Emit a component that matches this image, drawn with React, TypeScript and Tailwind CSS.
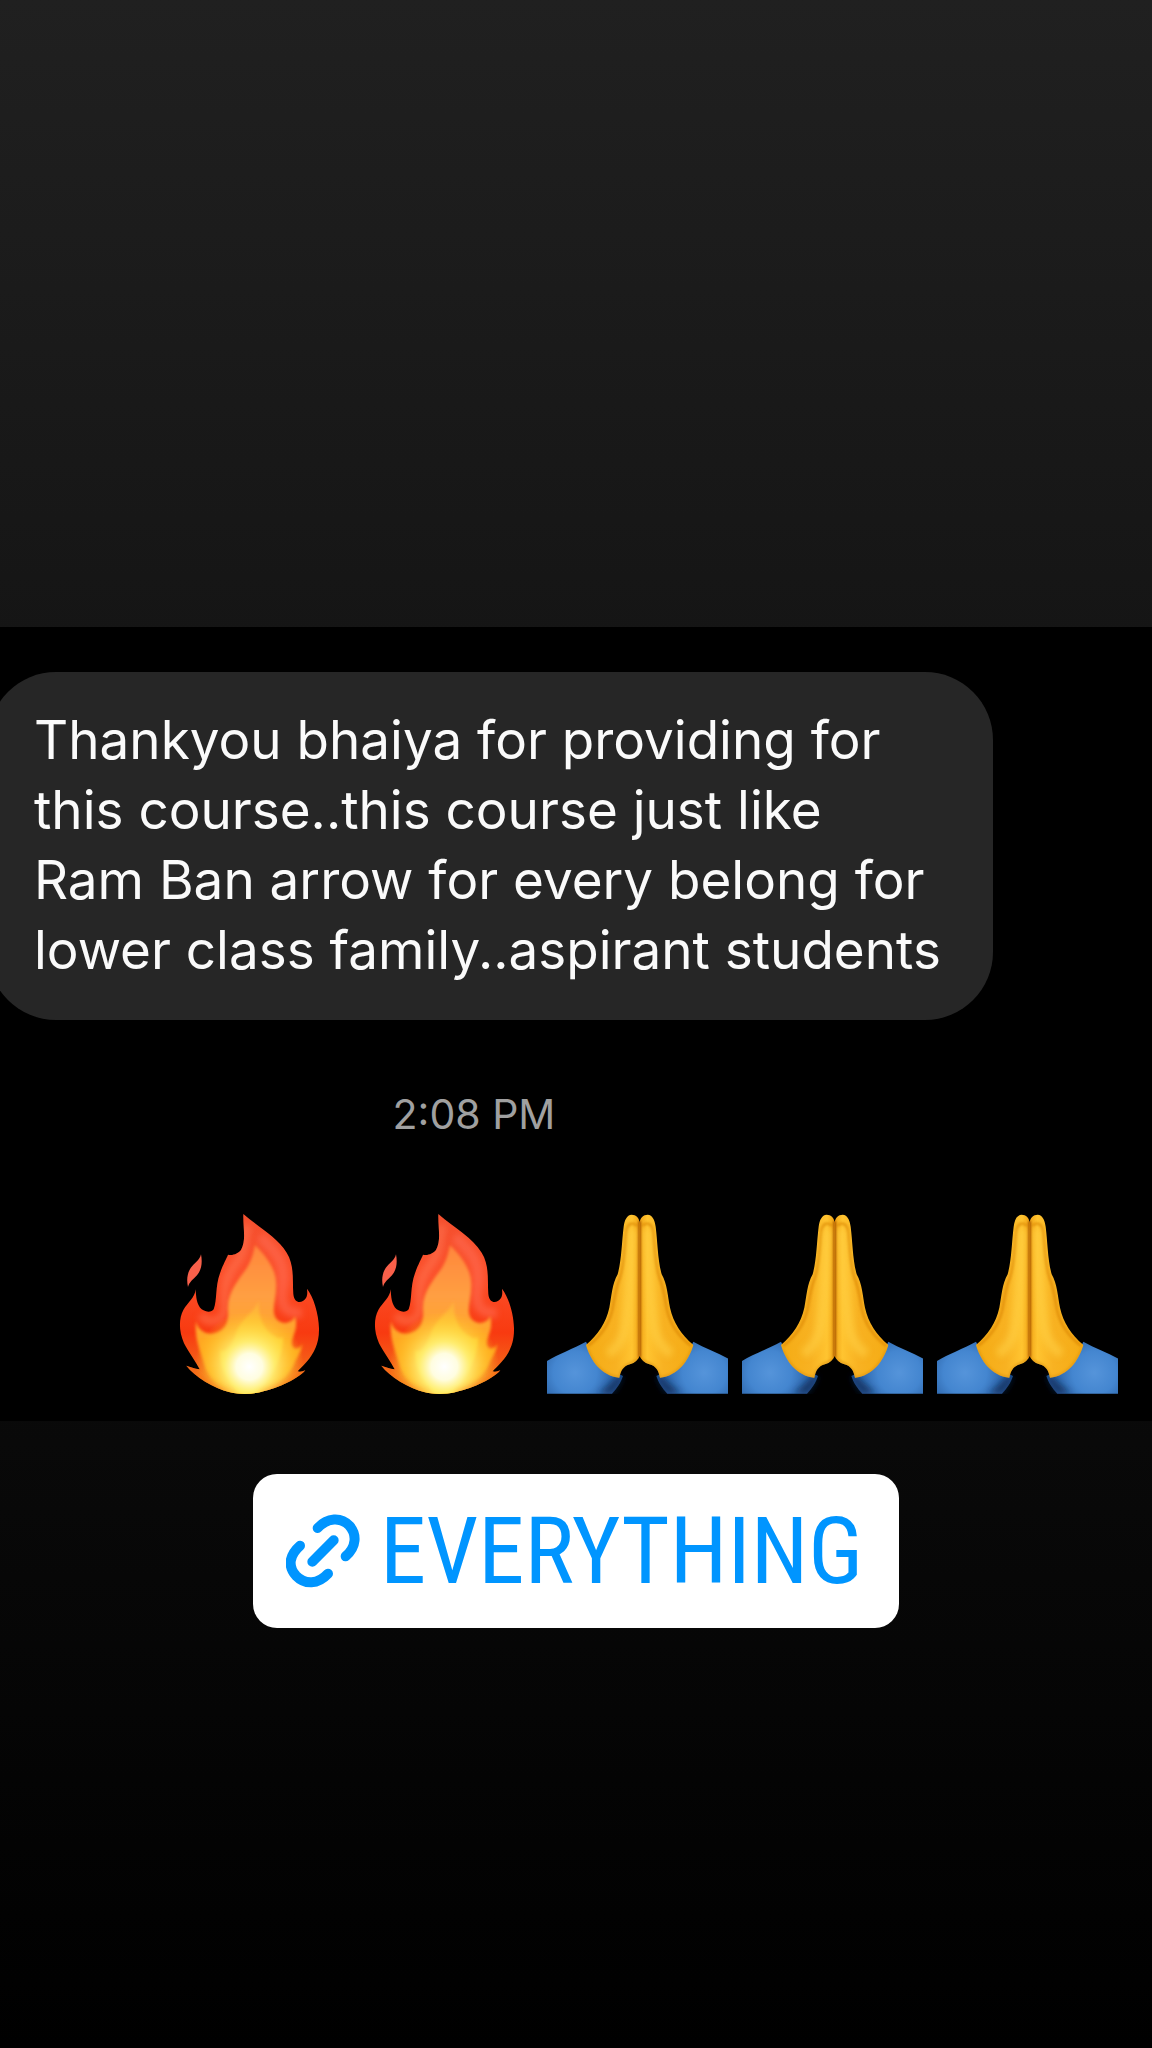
import React from "react";

function Fire({ id }: { id: string }) {
  const url = (name: string) => `url(#${id}-${name})`;
  return (
    <svg viewBox="-9 69 543 543" className="min-w-0 flex-1 max-w-[181px]" role="img" aria-label="fire">
      <defs>
        <linearGradient id={`${id}-outer`} x1="0" y1="72" x2="0" y2="612" gradientUnits="userSpaceOnUse">
          <stop offset="0" stopColor="#f4502f" />
          <stop offset="0.35" stopColor="#fc4f2a" />
          <stop offset="0.66" stopColor="#f83a10" />
          <stop offset="0.85" stopColor="#f4641a" />
          <stop offset="1" stopColor="#ff9a1c" />
        </linearGradient>
        <linearGradient id={`${id}-mid`} x1="0" y1="165" x2="0" y2="612" gradientUnits="userSpaceOnUse">
          <stop offset="0" stopColor="#ff863c" />
          <stop offset="0.35" stopColor="#ff9f42" />
          <stop offset="0.65" stopColor="#ffa822" />
          <stop offset="1" stopColor="#ffa010" />
        </linearGradient>
        <linearGradient id={`${id}-inner`} x1="0" y1="335" x2="0" y2="612" gradientUnits="userSpaceOnUse">
          <stop offset="0" stopColor="#ffb03c" />
          <stop offset="0.4" stopColor="#ffca30" />
          <stop offset="1" stopColor="#ffd818" />
        </linearGradient>
        <radialGradient id={`${id}-glow`} cx="268" cy="530" r="165" gradientUnits="userSpaceOnUse">
          <stop offset="0" stopColor="#ffffff" />
          <stop offset="0.24" stopColor="#fffde0" />
          <stop offset="0.46" stopColor="#fff27a" stopOpacity="0.85" />
          <stop offset="1" stopColor="#ffd21c" stopOpacity="0" />
        </radialGradient>
        <filter id={`${id}-soft`} x="-20%" y="-20%" width="140%" height="140%">
          <feGaussianBlur stdDeviation="9" />
        </filter>
        <filter id={`${id}-edge`} x="-10%" y="-10%" width="120%" height="120%">
          <feGaussianBlur stdDeviation="4" />
        </filter>
        <clipPath id={`${id}-clip`}>
          <path d="M250 72C300 115 352 142 380 188C404 226 397 272 400 312C403 342 426 342 438 324C443 315 442 305 441 296C460 320 476 370 477 415C478 460 462 490 440 515C425 532 415 540 413 544C420 547 428 544 436 541C410 572 340 598 300 607C270 613 240 614 210 607C160 595 105 560 79 527C90 530 105 537 119 538C110 520 85 485 72 460C55 420 57 385 70 360C85 335 104 325 107 298C108 320 110 345 125 358C140 368 155 367 161 358C172 330 165 290 180 250C188 225 200 205 204 194C218 198 235 190 243 180C260 150 248 110 250 72Z" />
        </clipPath>
      </defs>
      <path d="M123 193C128 220 124 240 111 256C99 269 88 276 84 291C79 270 82 249 92 234C103 219 119 212 123 193Z" fill="#f9604a" />
      <g clipPath={url("clip")}>
        <path d="M50 60H490V620H50Z" fill={url("outer")} />
        <path d="M262 105C250 160 255 190 225 225C200 255 190 300 194 350C196 390 150 410 122 376" fill="none" stroke="#ff7a58" strokeWidth="26" opacity="0.5" filter={url("soft")} />
        <path d="M300 140C350 185 378 220 368 290C360 350 376 372 425 368" fill="none" stroke="#ff7058" strokeWidth="30" opacity="0.55" filter={url("soft")} />
        <path d="M285 165C310 190 345 230 348 272C352 312 338 345 342 370C346 395 370 403 385 397C398 392 402 387 405 378C413 405 405 425 398 445C391 465 400 478 412 475C421 472 424 468 427 460C424 490 408 505 400 528C380 570 330 600 290 612H215C175 595 140 560 132 520C120 480 103 445 108 393C112 420 140 436 162 430C190 422 207 405 204 360C200 310 235 270 260 235C275 210 280 190 285 165Z" fill={url("mid")} filter={url("edge")} />
        <path d="M297 333C294 365 302 400 325 425C350 445 362 450 368 440C372 480 350 545 290 612H240C200 570 175 520 182 480C195 492 215 470 226 435C238 390 280 370 297 333Z" fill={url("inner")} filter={url("edge")} />
        <circle cx="268" cy="530" r="165" fill={url("glow")} />
        <path d="M60 480C105 545 150 585 225 612H60ZM480 470C430 550 370 585 290 612H480Z" fill="#f56a14" opacity="0.6" filter={url("soft")} />
      </g>
    </svg>
  );
}

function Prayer({ id }: { id: string }) {
  const url = (name: string) => `url(#${id}-${name})`;
  const half = (
    <>
      <path d="M168 457C130 478 85 494 51 515V613H246C262 595 272 582 279 560L200 520Z" fill={url("sleeve")} />
      <path d="M205 613H250C262 596 275 580 280 558L262 562Z" fill="#0b2550" opacity="0.7" filter={url("soft")} />
      <path d="M330 105C328 84 318 76 305 76C290 77 284 92 281 112C275 160 275 210 263 255C246 285 245 320 238 355C228 400 205 435 168 467C182 515 215 560 268 565C272 545 280 530 300 525C315 521 324 512 330 498Z" fill={url("hand")} />
      <g clipPath={url("clip")}>
        <path d="M322 110C310 98 293 100 289 125C283 180 285 220 270 265C255 300 254 325 247 362C237 405 214 440 174 470" fill="none" stroke="#d98200" strokeWidth="8" opacity="0.6" filter={url("fine")} />
        <path d="M308 120C300 220 300 330 285 420C278 450 262 475 235 495" fill="none" stroke="#ffd044" strokeWidth="28" opacity="0.6" filter={url("soft")} />
        <path d="M330 95V505" stroke="#a85600" strokeWidth="10" filter={url("fine")} />
        <path d="M172 480C190 525 220 560 268 565C274 535 290 525 328 510" fill="none" stroke="#d88a08" strokeWidth="8" opacity="0.5" filter={url("fine")} />
      </g>
    </>
  );
  return (
    <svg viewBox="51 71 543 543" className="min-w-0 flex-1 max-w-[181px]" role="img" aria-label="folded hands">
      <defs>
        <linearGradient id={`${id}-hand`} x1="170" y1="0" x2="330" y2="0" gradientUnits="userSpaceOnUse">
          <stop offset="0" stopColor="#f5ac14" />
          <stop offset="0.55" stopColor="#f8b222" />
          <stop offset="0.85" stopColor="#ffc430" />
          <stop offset="1" stopColor="#f0a214" />
        </linearGradient>
        <radialGradient id={`${id}-sleeve`} cx="135" cy="550" r="145" gradientUnits="userSpaceOnUse">
          <stop offset="0" stopColor="#5594da" />
          <stop offset="0.45" stopColor="#4486d0" />
          <stop offset="1" stopColor="#1f5192" />
        </radialGradient>
        <filter id={`${id}-soft`} x="-40%" y="-40%" width="180%" height="180%">
          <feGaussianBlur stdDeviation="9" />
        </filter>
        <filter id={`${id}-fine`} filterUnits="userSpaceOnUse" x="40" y="60" width="570" height="570">
          <feGaussianBlur stdDeviation="3" />
        </filter>
        <clipPath id={`${id}-clip`}>
          <path d="M330 105C328 84 318 76 305 76C290 77 284 92 281 112C275 160 275 210 263 255C246 285 245 320 238 355C228 400 205 435 168 467C182 515 215 560 268 565C272 545 280 530 300 525C315 521 324 512 330 498Z" />
        </clipPath>
      </defs>
      <g>{half}</g>
      <g transform="translate(658 0) scale(-1 1)">{half}</g>
    </svg>
  );
}

function LinkIcon() {
  return (
    <svg viewBox="138 164 222 222" className="size-[74px] shrink-0" fill="none" stroke="#0095ff" strokeWidth="30" strokeLinecap="round" aria-hidden="true">
      <path d="M233 206C262 174 303 172 328 199C351 225 350 262 317 291" />
      <path d="M180 259C147 288 143 321 168 349C195 377 234 376 264 343" />
      <path d="M217 307L281 243" />
    </svg>
  );
}

export default function App() {
  return (
    <main className="flex min-h-screen flex-col overflow-hidden bg-linear-to-b/srgb from-[#202020] via-[#151515] via-31% to-black pt-[627px] font-['Inter',sans-serif]">
      <section className="flex flex-col bg-black pt-[45px] pb-[27px]">
        <p className="-ml-3 w-[1005px] max-w-full rounded-[68px] bg-[#262626] pt-[33px] pb-[35px] pr-[34px] pl-[46px] text-[53px] leading-[70px] text-[#fafafa]">
          Thankyou bhaiya for providing for
          <br />
          this course..this course just like
          <br />
          Ram Ban arrow for every belong for
          <br />
          lower class family..aspirant students
        </p>
        <time className="mt-[69px] mr-[204px] self-center text-[41px] leading-[50px] text-[#a0a0a0]">2:08 PM</time>
        <div className="mt-[74px] flex justify-end gap-[14px] pr-[34px] pl-[34px]">
          <Fire id="fire-a" />
          <Fire id="fire-b" />
          <Prayer id="pray-a" />
          <Prayer id="pray-b" />
          <Prayer id="pray-c" />
        </div>
      </section>
      <a
        href="#everything"
        className="mt-[53px] flex h-[154px] w-[646px] max-w-full items-center gap-5 self-center rounded-[24px] bg-white px-[33px] font-['Liberation_Sans_Narrow','Roboto_Condensed','Open_Sans_Condensed',sans-serif] text-[93px] leading-none text-[#0095ff]"
      >
        <LinkIcon />
        EVERYTHING
      </a>
    </main>
  );
}
